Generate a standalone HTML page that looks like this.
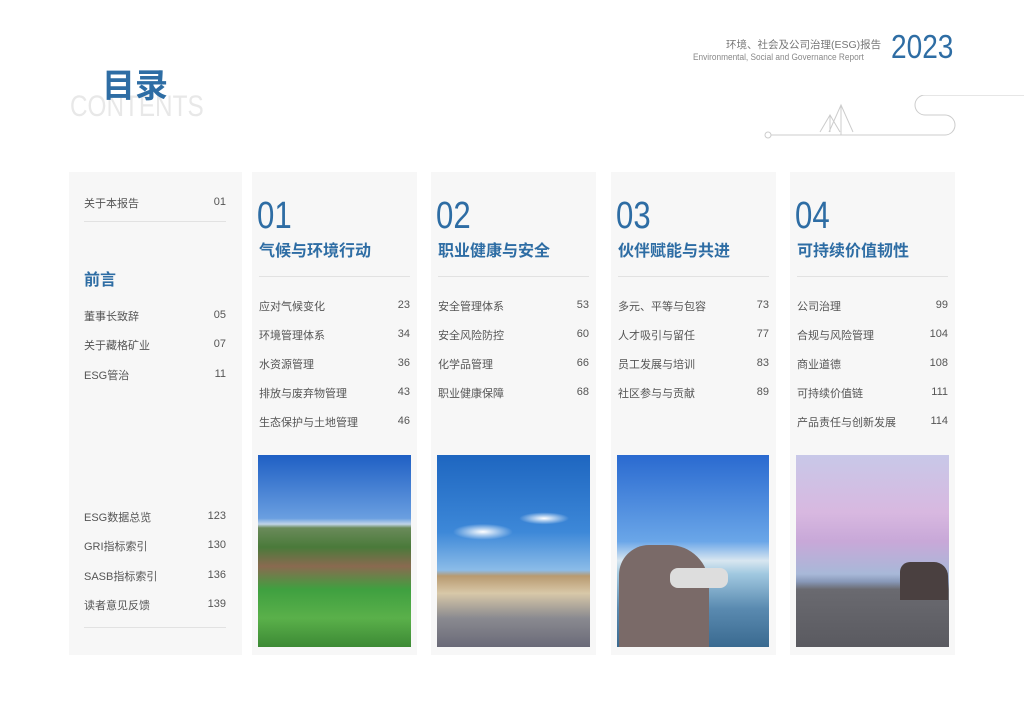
<!DOCTYPE html><html><head><meta charset="utf-8"><style>
*{margin:0;padding:0;box-sizing:border-box}
body{width:1024px;height:724px;background:#fff;font-family:"Liberation Sans","Noto Sans CJK SC",sans-serif;position:relative;overflow:hidden;color:#555}
.a{position:absolute}
.card{position:absolute;top:172px;height:483px;background:#f7f7f7}
.row{position:absolute;font-size:11px;color:#555;line-height:14px}
.row span{position:absolute;right:0;top:-2px}
.num{position:absolute;font-size:38px;color:#2e6da4;font-weight:300;line-height:40px;transform:scaleX(.82);transform-origin:left}
.tt{position:absolute;font-size:16px;color:#2e6da4;font-weight:bold;line-height:20px}
.ln{position:absolute;height:1px;background:#e2e2e2}
</style></head><body>
<div class="a" style="left:726px;top:37px;font-size:10.5px;color:#777;white-space:nowrap">环境、社会及公司治理(ESG)报告</div>
<div class="a" style="left:693px;top:52px;font-size:9px;color:#888;white-space:nowrap;transform:scaleX(.92);transform-origin:left">Environmental, Social and Governance Report</div>
<div class="a" style="left:891px;top:30px;font-size:33px;color:#2e6da4;line-height:34px;transform:scaleX(.85);transform-origin:left">2023</div>
<svg class="a" style="left:760px;top:95px" width="264" height="45" fill="none" stroke="#ccc" stroke-width="1">
<circle cx="8" cy="40" r="3"/><path d="M11 40H185a10 10 0 0 0 0-20H165a10 10 0 0 1 0-20H264"/>
<path d="M80 37L70 20L60 37M70 20V37M93 37L81 10L69 37M81 10V40"/></svg>
<div class="a" style="left:70px;top:90px;font-size:30px;color:#e8e8e8;font-weight:300;transform:scaleX(.81);transform-origin:left">CONTENTS</div>
<div class="a" style="left:102px;top:66px;font-size:33px;color:#2e6da4;font-weight:bold;line-height:40px">目录</div>

<div class="card" style="left:69px;width:173px"></div>
<div class="row" style="left:84px;top:197px;width:142px">关于本报告<span>01</span></div>
<div class="ln" style="left:84px;top:221px;width:142px"></div>
<div class="tt" style="left:84px;top:271px">前言</div>
<div class="row" style="left:84px;top:310px;width:142px">董事长致辞<span>05</span></div>
<div class="row" style="left:84px;top:339px;width:142px">关于藏格矿业<span>07</span></div>
<div class="row" style="left:84px;top:369px;width:142px">ESG管治<span>11</span></div>
<div class="row" style="left:84px;top:511px;width:142px">ESG数据总览<span>123</span></div>
<div class="row" style="left:84px;top:540px;width:142px">GRI指标索引<span>130</span></div>
<div class="row" style="left:84px;top:570px;width:142px">SASB指标索引<span>136</span></div>
<div class="row" style="left:84px;top:599px;width:142px">读者意见反馈<span>139</span></div>
<div class="ln" style="left:84px;top:627px;width:142px"></div>

<div class="card" style="left:252px;width:165px"></div>
<div class="num" style="left:257px;top:196px">01</div>
<div class="tt" style="left:259px;top:242px">气候与环境行动</div>
<div class="ln" style="left:259px;top:276px;width:151px"></div>
<div class="row" style="left:259px;top:300px;width:151px">应对气候变化<span>23</span></div>
<div class="row" style="left:259px;top:329px;width:151px">环境管理体系<span>34</span></div>
<div class="row" style="left:259px;top:358px;width:151px">水资源管理<span>36</span></div>
<div class="row" style="left:259px;top:387px;width:151px">排放与废弃物管理<span>43</span></div>
<div class="row" style="left:259px;top:416px;width:151px">生态保护与土地管理<span>46</span></div>
<div class="a" style="left:258px;top:455px;width:153px;height:192px;background:linear-gradient(#1f5fc4 0%,#6a9fe0 33%,#c0d4e8 36%,#6a8a5a 38%,#4a7a3a 48%,#8a6a50 58%,#3fa040 70%,#5ab04a 85%,#3d8a35 100%)"></div>

<div class="card" style="left:431px;width:165px"></div>
<div class="num" style="left:436px;top:196px">02</div>
<div class="tt" style="left:438px;top:242px">职业健康与安全</div>
<div class="ln" style="left:438px;top:276px;width:151px"></div>
<div class="row" style="left:438px;top:300px;width:151px">安全管理体系<span>53</span></div>
<div class="row" style="left:438px;top:329px;width:151px">安全风险防控<span>60</span></div>
<div class="row" style="left:438px;top:358px;width:151px">化学品管理<span>66</span></div>
<div class="row" style="left:438px;top:387px;width:151px">职业健康保障<span>68</span></div>
<div class="a" style="left:437px;top:455px;width:153px;height:192px;background:radial-gradient(ellipse 30px 8px at 30% 40%,#fff,transparent),radial-gradient(ellipse 25px 6px at 70% 33%,#fff,transparent),linear-gradient(#1e66c0 0%,#3d88d8 40%,#8cbce8 60%,#b89a70 63%,#d8c8a8 72%,#8a8a90 85%,#6a6a78 100%)"></div>

<div class="card" style="left:611px;width:165px"></div>
<div class="num" style="left:616px;top:196px">03</div>
<div class="tt" style="left:618px;top:242px">伙伴赋能与共进</div>
<div class="ln" style="left:618px;top:276px;width:151px"></div>
<div class="row" style="left:618px;top:300px;width:151px">多元、平等与包容<span>73</span></div>
<div class="row" style="left:618px;top:329px;width:151px">人才吸引与留任<span>77</span></div>
<div class="row" style="left:618px;top:358px;width:151px">员工发展与培训<span>83</span></div>
<div class="row" style="left:618px;top:387px;width:151px">社区参与与贡献<span>89</span></div>
<div class="a" style="left:617px;top:455px;width:152px;height:192px;background:linear-gradient(#2a6ad0 0%,#6aa6e8 45%,#d8e6f0 55%,#a0c8e0 62%,#5a8ab0 80%,#3a6a90 100%)"></div>
<div class="a" style="left:619px;top:545px;width:90px;height:102px;background:#7a6a68;border-radius:30px 40px 0 0"></div>
<div class="a" style="left:670px;top:568px;width:58px;height:20px;background:#ddd;border-radius:8px"></div>

<div class="card" style="left:790px;width:165px"></div>
<div class="num" style="left:795px;top:196px">04</div>
<div class="tt" style="left:797px;top:242px">可持续价值韧性</div>
<div class="ln" style="left:797px;top:276px;width:151px"></div>
<div class="row" style="left:797px;top:300px;width:151px">公司治理<span>99</span></div>
<div class="row" style="left:797px;top:329px;width:151px">合规与风险管理<span>104</span></div>
<div class="row" style="left:797px;top:358px;width:151px">商业道德<span>108</span></div>
<div class="row" style="left:797px;top:387px;width:151px">可持续价值链<span>111</span></div>
<div class="row" style="left:797px;top:416px;width:151px">产品责任与创新发展<span>114</span></div>
<div class="a" style="left:796px;top:455px;width:153px;height:192px;background:linear-gradient(#c8c8e8 0%,#d8b8e0 30%,#c8a8d8 45%,#a8b8d8 62%,#8898b8 66%,#6a6a70 70%,#5a5a60 100%)"></div>
<div class="a" style="left:900px;top:562px;width:48px;height:38px;background:#4a4040;border-radius:10px 14px 0 0"></div>
</body></html>
